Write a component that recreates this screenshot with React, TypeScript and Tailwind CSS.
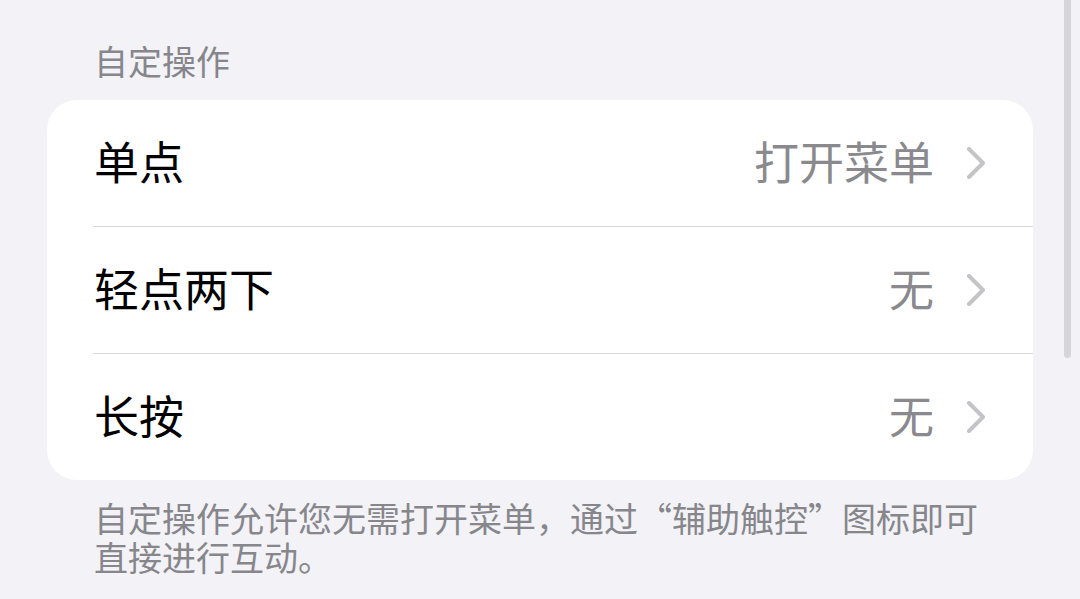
const font = { fontFamily: '"Noto Sans CJK SC", "Noto Sans", sans-serif' };

const rows = [
  { label: '单点', value: '打开菜单' },
  { label: '轻点两下', value: '无' },
  { label: '长按', value: '无' },
];

function Chevron() {
  return (
    <svg width="20" height="32" viewBox="0 0 20 32" className="shrink-0">
      <polyline
        points="3,2 17,16 3,30"
        fill="none"
        stroke="#c4c4c7"
        strokeWidth="4"
        strokeLinecap="round"
        strokeLinejoin="round"
      />
    </svg>
  );
}

export default function App() {
  return (
    <div
      className="relative w-[1080px] h-[599px] overflow-hidden bg-[#f2f2f7]"
      style={font}
    >
      {/* Section header */}
      <div className="h-[100px] pt-[43px] pl-[94px]">
        <div className="text-[34px] leading-[36px] text-[#86868b]">自定操作</div>
      </div>

      {/* Card */}
      <div className="mx-[47px] bg-white rounded-[30px] overflow-hidden">
        {rows.map((row, i) => (
          <div key={row.label}>
            {i > 0 && <div className="ml-[46px] h-px bg-[#d8d8db]" />}
            <div className="h-[126px] flex items-center pl-[47px] pr-[47px]">
              <div className="text-[45px] leading-none text-black flex-1 pb-[5px]">{row.label}</div>
              <div className="text-[45px] leading-none text-[#8a8a8e] mr-[32px] pb-[5px]">{row.value}</div>
              <Chevron />
            </div>
          </div>
        ))}
      </div>

      {/* Footer */}
      <div className="mt-[18px] pl-[94px] pr-[80px] text-[34px] leading-[39px] text-[#86868b]">
        自定操作允许您无需打开菜单，通过“辅助触控”图标即可直接进行互动。
      </div>

      {/* Scroll indicator */}
      <div className="absolute right-[9px] top-[-10px] w-[7px] h-[368px] rounded-full bg-[#d6d6da]" />
    </div>
  );
}
